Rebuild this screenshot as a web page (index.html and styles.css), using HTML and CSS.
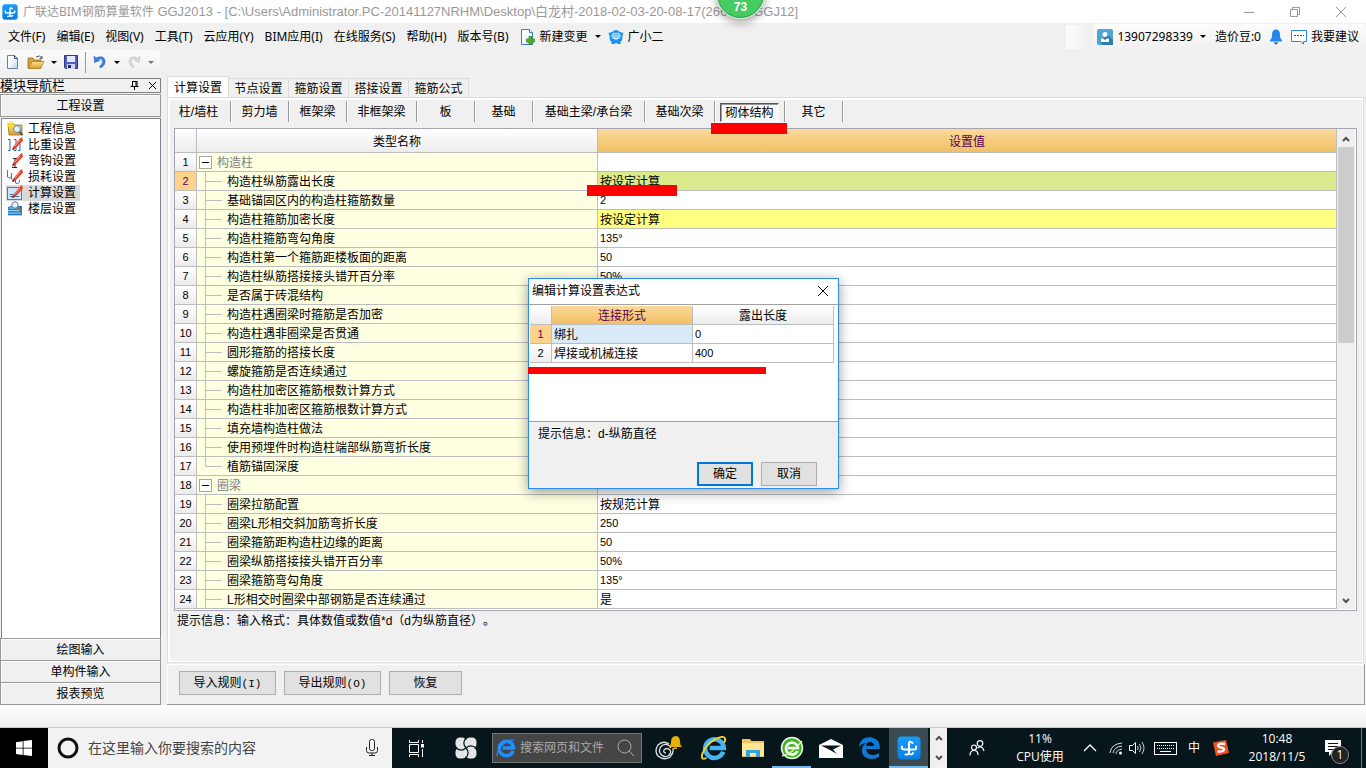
FILE: index.html
```html
<!DOCTYPE html>
<html lang="zh-CN">
<head>
<meta charset="utf-8">
<title>广联达BIM钢筋算量软件 GGJ2013</title>
<link rel="stylesheet" href="styles.css">
</head>
<body>
<svg width="0" height="0" class="defs" aria-hidden="true">
  <defs>
    <linearGradient id="gold" x1="0" y1="0" x2="0" y2="1"><stop offset="0" stop-color="#fbe38e"/><stop offset="1" stop-color="#dc9d2a"/></linearGradient>
    <linearGradient id="sky" x1="0" y1="0" x2="0" y2="1"><stop offset="0" stop-color="#1a9dfb"/><stop offset="1" stop-color="#067fe6"/></linearGradient>
    <linearGradient id="paper" x1="0" y1="0" x2="1" y2="1"><stop offset="0.4" stop-color="#fff"/><stop offset="1" stop-color="#b9d0ea"/></linearGradient>
    <symbol id="ggj" viewBox="0 0 24 24"><rect x="0.5" y="0.5" width="23" height="23" rx="4" fill="url(#sky)"/><path d="M15.500 7Q12 4 12 8v8q0 3-3.500 2.500M5 10.500Q4 13.500 7.500 13.500H17q3 0 2-3M12 17.500q3 2 4-.5" fill="none" stroke="#fff" stroke-width="2" stroke-linecap="round"/></symbol>
    <symbol id="ie" viewBox="0 0 24 24"><path d="M20.500 15.500A8.600 8.600 0 1 1 21 12H8" fill="none" stroke="currentColor" stroke-width="4.200"/></symbol>
    <symbol id="pencil" viewBox="0 0 16 16"><path d="M6 10L12.500 2 15 0l1 3.500L8.500 11.500 5.500 13z" fill="#e8432a"/><path d="M8 9l5-6" stroke="#ffa08a" stroke-width="1"/><path d="M5 13l1-2.200 1.800 1.200z" fill="#333"/></symbol>
  </defs>
</svg>

<header class="titlebar">
  <svg class="app-icon" aria-hidden="true"><use href="#ggj"/></svg>
  <h1><span class="appname">广联达BIM钢筋算量软件</span> GGJ2013 - [C:\Users\Administrator.PC-20141127NRHM\Desktop\白龙村-2018-02-03-20-08-17(266<span class="tail">GGJ12]</span></h1>
  <div class="winbtns">
    <button aria-label="最小化"><svg width="12" height="12"><path d="M1 6.500h10" stroke="#999"/></svg></button>
    <button aria-label="还原"><svg width="12" height="12"><path d="M1.500 3.500h7v7h-7zM3.500 3V1.500h7v7H9" fill="none" stroke="#999"/></svg></button>
    <button aria-label="关闭"><svg width="12" height="12"><path d="M1 1l10 10M11 1L1 11" stroke="#999"/></svg></button>
  </div>
  <div class="speed">73</div>
</header>

<nav class="menubar">
  <button>文件(F)</button><button>编辑(E)</button><button>视图(V)</button><button>工具(T)</button><button>云应用(Y)</button><button>BIM应用(I)</button><button>在线服务(S)</button><button>帮助(H)</button><button>版本号(B)</button>
  <button class="withicon"><svg width="16" height="16" viewBox="0 0 16 16"><path d="M1.500.5h8l3 3v12h-11z" fill="url(#paper)" stroke="#3b82b8"/><path d="M9.500.5v3h3" fill="#fff" stroke="#3b82b8"/><path d="M9 7.500h3v2.500h2.500v3H12v2.500H9V13H6.500v-3H9z" fill="#4db51b" stroke="#2b8a0e" stroke-width=".7"/></svg>新建变更<i class="caret"></i></button>
  <button class="withicon"><svg width="16" height="16" viewBox="0 0 16 16"><path d="M4 3q4-4 8 0l3.500 1-1 3q0 5-2 6v2H9v-1H7v1H3.500v-2q-2-1-2-6l-1-3z" fill="#1b94ec"/><ellipse cx="8" cy="7" rx="5" ry="3.500" fill="#74caff"/><circle cx="6" cy="5.500" r="1.300" fill="#fff"/><circle cx="10" cy="5.500" r="1.300" fill="#fff"/><circle cx="6.200" cy="5.500" r=".6"/><circle cx="9.800" cy="5.500" r=".6"/><path d="M5 8.500q3 3 6 0" fill="none" stroke="#fff"/></svg>广小二</button>
  <span class="grow"></span>
  <span class="grip"></span>
  <div class="account">
    <button><svg width="16" height="16" viewBox="0 0 16 16"><rect width="16" height="16" rx="2" fill="#4ba6d6"/><path d="M10 5l6 6v5H6l-3-3z" fill="#347ca8"/><circle cx="8" cy="5.500" r="2.500" fill="#fff"/><path d="M4 13V9.500h2L8 11l2-1.500h2V13z" fill="#fff"/></svg>13907298339<i class="caret"></i></button>
    <span>造价豆:0</span>
    <button aria-label="消息"><svg width="12" height="16" viewBox="0 0 12 16"><path d="M6 .5q4 0 4 5.500 0 4 2 5v1.500H0V11q2-1 2-5Q2 .5 6 .5z" fill="#2188f0"/><path d="M3.500 13.500h5L6 15.500z" fill="#123c78"/></svg></button>
    <button><svg width="16" height="16" viewBox="0 0 16 16"><path d="M.5 1.500h15v11h-3v2.500l-3-2.500h-9z" fill="#fff" stroke="#2484f0"/><path d="M3 6.500h10" stroke="#125ab8" stroke-dasharray="2 1"/></svg>我要建议</button>
  </div>
</nav>

<div class="toolbar">
  <button aria-label="新建"><svg width="16" height="16" viewBox="0 0 16 16"><path d="M3.500 1.500h7l3 3v10h-10z" fill="url(#paper)" stroke="#6d7f9c"/><path d="M10.500 1.500v3h3" fill="none" stroke="#34425c"/></svg></button>
  <button aria-label="打开"><svg width="18" height="16" viewBox="0 0 18 16"><path d="M1 14V4h5l1 2h7v8z" fill="#d5a33a" stroke="#8c6518" stroke-width=".7"/><path d="M1.500 14.500L5 7.500h12l-3.500 7z" fill="url(#gold)" stroke="#a8761a" stroke-width=".7"/><path d="M9 3q4-2.500 6 1m0-2v2.500h-2.500" fill="none" stroke="#555"/></svg></button><i class="caret"></i>
  <button aria-label="保存"><svg width="16" height="16" viewBox="0 0 16 16"><path d="M1.500 1.500h13v13h-12l-1-1z" fill="#5860c0" stroke="#30358e"/><rect x="4" y="2" width="8" height="6" fill="#e3e8fc"/><rect x="4" y="10" width="8" height="5" fill="#d0d4f0"/><rect x="5" y="11" width="3" height="3" fill="#262a70"/></svg></button>
  <span class="vsep"></span>
  <button aria-label="撤销"><svg width="16" height="16" viewBox="0 0 16 16"><path d="M2 2l.5 6.500L8 6.500 6 5.500q4-2 4.500 1.500.4 3-3 5.500l1 1.500q5-2.500 4.500-7.500Q11.500.5 4 4z" fill="#3c7de0" stroke="#245db8" stroke-width=".5"/></svg></button><i class="caret"></i>
  <button aria-label="重做" disabled><svg width="16" height="16" viewBox="0 0 16 16"><path d="M14 2l-.5 6.500L8 6.500l2-1Q6 3.500 5.500 7q-.4 3 3 5.500l-1 1.500Q2.500 11.500 3 6.500 4.500.5 12 4z" fill="#d7d7d7" stroke="#c3c3c3" stroke-width=".5"/></svg></button><i class="caret dim"></i>
</div>

<main class="workspace">
  <aside class="navigator">
    <div class="navhead"><h2>模块导航栏</h2>
      <button aria-label="固定"><svg width="9" height="9"><path d="M2 .5h5M2.500 0v5.500M6 0v5.500M7 0v5.500M.5 5.500h8M4.500 6v3" stroke="#000" fill="none"/></svg></button>
      <button aria-label="关闭"><svg width="9" height="9"><path d="M1 1l7 7M8 1L1 8" stroke="#000"/></svg></button>
    </div>
    <button class="section">工程设置</button>
    <ul class="tree">
      <li><svg width="16" height="16" viewBox="0 0 16 16"><path d="M1 3h6l1 1h7v10H2z" fill="url(#gold)" stroke="#96701f" stroke-width=".8"/><path d="M0 1l6 5M6 0L1 6M3 0v7M0 4h7" stroke="#ffe600"/><circle cx="10" cy="8" r="3.500" fill="#dcefff" stroke="#667f9c"/><path d="M12.500 11l3 3" stroke="#555" stroke-width="2"/></svg>工程信息</li>
      <li><svg width="16" height="16" viewBox="0 0 16 16"><path d="M1 2.500h2v11H1M7 2.500h2v11H7M11 13.500h2v-7" fill="none" stroke="#2b62b0"/><use href="#pencil"/></svg>比重设置</li>
      <li><svg width="16" height="16" viewBox="0 0 16 16"><path d="M6 5.500h4M8 6v8M5 14.500h5" stroke="#222"/><use href="#pencil"/></svg>弯钩设置</li>
      <li><svg width="16" height="16" viewBox="0 0 16 16"><path d="M.5 1v7q4 3 4-2V4v6q4 4 4-1v5q4 2 4-3" fill="none" stroke="#3477c4"/><use href="#pencil"/></svg>损耗设置</li>
      <li class="current"><svg width="16" height="16" viewBox="0 0 16 16"><rect x=".5" y="2.500" width="14" height="12" fill="#cfe5fc" stroke="#3d7fcb"/><path d="M3 9.500h3M3 11.500h9" stroke="#3f75bd"/><use href="#pencil"/></svg>计算设置</li>
      <li><svg width="16" height="16" viewBox="0 0 16 16"><path d="M1 13V6l3-1h11v9l-3 1H1z" fill="#237ac8"/><path d="M2 7h10M1 9.500h13M1 12h13M1 14.500h12" stroke="#9dddff"/><circle cx="8" cy="4" r="3.200" fill="#e3f3ff" stroke="#68798d"/><path d="M10 6.500l4 3" stroke="#8b704d" stroke-width="2"/></svg>楼层设置</li>
    </ul>
    <button class="section low">绘图输入</button>
    <button class="section low">单构件输入</button>
    <button class="section low">报表预览</button>
  </aside>

  <section class="content">
    <div class="tabs" role="tablist">
      <button role="tab" aria-selected="true">计算设置</button><button role="tab">节点设置</button><button role="tab">箍筋设置</button><button role="tab">搭接设置</button><button role="tab">箍筋公式</button>
    </div>
    <div class="page">
      <div class="subtabs">
        <button class="first">柱/墙柱</button><button>剪力墙</button><button>框架梁</button><button class="mid">非框架梁</button><button>板</button><button>基础</button><button class="wide">基础主梁/承台梁</button><button class="mid">基础次梁</button><button class="mid picked"><span>砌体结构</span><i class="mark"></i></button><button>其它</button>
      </div>
      <div class="gridframe">
        <table class="grid">
          <colgroup><col class="c-num"><col class="c-name"><col></colgroup>
          <thead><tr><th></th><th>类型名称</th><th class="hot">设置值</th></tr></thead>
          <tbody>
            <tr class="group"><th>1</th><td><button aria-label="折叠"></button>构造柱</td><td></td></tr>
            <tr class="active"><th>2</th><td>构造柱纵筋露出长度</td><td>按设定计算<i class="mark"></i></td></tr>
            <tr><th>3</th><td>基础锚固区内的构造柱箍筋数量</td><td class="n">2</td></tr>
            <tr class="custom"><th>4</th><td>构造柱箍筋加密长度</td><td>按设定计算</td></tr>
            <tr><th>5</th><td>构造柱箍筋弯勾角度</td><td class="n">135°</td></tr>
            <tr><th>6</th><td>构造柱第一个箍筋距楼板面的距离</td><td class="n">50</td></tr>
            <tr><th>7</th><td>构造柱纵筋搭接接头错开百分率</td><td class="n">50%</td></tr>
            <tr><th>8</th><td>是否属于砖混结构</td><td></td></tr>
            <tr><th>9</th><td>构造柱遇圈梁时箍筋是否加密</td><td></td></tr>
            <tr><th>10</th><td>构造柱遇非圈梁是否贯通</td><td></td></tr>
            <tr><th>11</th><td>圆形箍筋的搭接长度</td><td></td></tr>
            <tr><th>12</th><td>螺旋箍筋是否连续通过</td><td></td></tr>
            <tr><th>13</th><td>构造柱加密区箍筋根数计算方式</td><td></td></tr>
            <tr><th>14</th><td>构造柱非加密区箍筋根数计算方式</td><td></td></tr>
            <tr><th>15</th><td>填充墙构造柱做法</td><td></td></tr>
            <tr><th>16</th><td>使用预埋件时构造柱端部纵筋弯折长度</td><td></td></tr>
            <tr class="last"><th>17</th><td>植筋锚固深度</td><td></td></tr>
            <tr class="group"><th>18</th><td><button aria-label="折叠"></button>圈梁</td><td></td></tr>
            <tr><th>19</th><td>圈梁拉筋配置</td><td>按规范计算</td></tr>
            <tr><th>20</th><td>圈梁L形相交斜加筋弯折长度</td><td class="n">250</td></tr>
            <tr><th>21</th><td>圈梁箍筋距构造柱边缘的距离</td><td class="n">50</td></tr>
            <tr><th>22</th><td>圈梁纵筋搭接接头错开百分率</td><td class="n">50%</td></tr>
            <tr><th>23</th><td>圈梁箍筋弯勾角度</td><td class="n">135°</td></tr>
            <tr><th>24</th><td>L形相交时圈梁中部钢筋是否连续通过</td><td>是</td></tr>
          </tbody>
        </table>
        <div class="scroll">
          <button aria-label="向上"><svg width="8" height="6"><path d="M1 5l3-3 3 3" fill="none" stroke="#505050" stroke-width="2"/></svg></button>
          <div class="thumb"></div>
          <span class="grow"></span>
          <button aria-label="向下"><svg width="8" height="6"><path d="M1 1l3 3 3-3" fill="none" stroke="#505050" stroke-width="2"/></svg></button>
        </div>
      </div>
      <p class="hint">提示信息：输入格式：具体数值或数值*d（d为纵筋直径）。</p>
    </div>
    <div class="actions">
      <button class="btn wide">导入规则<span class="mono">(I)</span></button>
      <button class="btn wide">导出规则<span class="mono">(O)</span></button>
      <button class="btn mid">恢复</button>
    </div>
  </section>
</main>
<div class="statusbar"></div>

<div class="dialog" role="dialog" aria-labelledby="dlg-title">
  <div class="dlg-head"><h2 id="dlg-title">编辑计算设置表达式</h2><button aria-label="关闭"><svg width="12" height="12"><path d="M1 1l10 10M11 1L1 11" stroke="#000"/></svg></button></div>
  <div class="dlg-grid">
    <table class="grid">
      <colgroup><col class="c-num"><col><col></colgroup>
      <thead><tr><th></th><th class="hot">连接形式</th><th>露出长度</th></tr></thead>
      <tbody>
        <tr class="active"><th>1</th><td>绑扎</td><td class="n">0</td></tr>
        <tr><th>2</th><td>焊接或机械连接</td><td class="n">400</td></tr>
      </tbody>
    </table>
    <i class="mark"></i>
  </div>
  <p>提示信息：d-纵筋直径</p>
  <div class="dlg-actions"><button class="btn default">确定</button><button class="btn">取消</button></div>
</div>

<footer class="taskbar">
  <button class="start" aria-label="开始"><svg width="16" height="16" viewBox="0 0 16 16"><path d="M0 2.200l6.700-1v6.500H0zM7.500 1.100L16 0v7.700H7.500zM0 8.400h6.700v6.500L0 13.900zM7.500 8.400H16V16l-8.500-1.100z" fill="#fff"/></svg></button>
  <div class="cortana">
    <svg width="22" height="22"><circle cx="11" cy="11" r="9" fill="none" stroke="#111" stroke-width="3"/></svg>
    <input type="text" aria-label="搜索" placeholder="在这里输入你要搜索的内容">
    <svg width="12" height="18"><rect x="3.500" y=".5" width="5" height="11" rx="2" fill="none" stroke="#222"/><path d="M.5 8v3.500q0 2.500 2.500 2.500h6q2.500 0 2.500-2.500V8M6 14v2.500M3 16.500h6" fill="none" stroke="#222"/></svg>
  </div>
  <button class="s48" aria-label="任务视图"><svg width="17" height="17"><path d="M1.500 4.500h9v8h-9zM1.500 0v2.500h9V0M1.500 17v-2.500h9V17M14.500 0v3M14.500 9v8" fill="none" stroke="#fff"/><path d="M13 4h3v3.500h-3z" fill="#fff"/></svg></button>
  <button class="s52" aria-label="浏览器"><svg width="22" height="22" viewBox="0 0 22 22"><g fill="#e3e5e6"><rect x=".5" y=".5" width="11" height="11" rx="4.500"/><rect x="10.500" y=".5" width="11" height="11" rx="4.500"/><rect x=".5" y="10.500" width="11" height="11" rx="4.500"/><rect x="10.500" y="10.500" width="11" height="11" rx="4.500"/><rect x="6" y="6" width="10" height="10"/></g><g fill="none" stroke="#07161b" stroke-width="1.200"><path id="blade" d="M11 11Q6.500 6 11.500.5"/><use href="#blade" transform="rotate(90 11 11)"/><use href="#blade" transform="rotate(180 11 11)"/><use href="#blade" transform="rotate(270 11 11)"/></g></svg></button>
  <div class="websearch">
    <svg width="20" height="20" viewBox="0 0 24 24" color="#1f8fff"><use href="#ie"/><path d="M2 22Q-1 18 8 8q9-8 14-5" fill="none" stroke="#1f8fff" stroke-width="1.500"/></svg>
    <input type="text" aria-label="搜索网页和文件" placeholder="搜索网页和文件">
    <svg width="18" height="18"><circle cx="7.500" cy="7.500" r="6.500" fill="none" stroke="#aaa"/><path d="M12 12l5 5" stroke="#aaa"/></svg>
  </div>
  <button class="s52" aria-label="通知铃"><svg width="28" height="26" viewBox="0 0 28 26"><g fill="none" stroke="#dfe5e6" stroke-width="1.300"><path d="M15 9Q9 5 4 10 0 16 4 21q6 5 12 1 4-4 3-9"/><path d="M17 13q-3-5-8-3-5 3-3 8 3 5 8 3 4-3 2-6-3-3-6 0-1 3 2 3"/></g><path d="M22 1q4 0 4 6 0 3 2 5H15q2-2 2-5 0-6 5-6zM20 12.500h3v1.500h-3z" fill="#e8b000"/></svg></button>
  <button class="s39" aria-label="Internet Explorer"><svg width="26" height="26" viewBox="0 0 24 24" color="#45b4f0"><use href="#ie"/><path d="M5 21Q0 24 1 18 4 9 13 4q8-4 9-1 1 2-1 4" fill="none" stroke="#f4d02d" stroke-width="1.800"/></svg></button>
  <button class="s39" aria-label="文件资源管理器"><svg width="22" height="18" viewBox="0 0 22 18"><path d="M0 0h8l1.500 2H22v16H0z" fill="#f0c65c"/><path d="M0 4h22v13H0z" fill="#ffe695"/><path d="M4 18v-7h14v7h-4v-4H8v4z" fill="#2ea3e0"/></svg></button>
  <button class="s39 running" aria-label="安全浏览器"><svg width="24" height="24" viewBox="0 0 24 24"><circle cx="12" cy="12" r="10.500" fill="#46b426" stroke="#e9f7e4" stroke-width="1.500"/><path d="M17.500 15a6 6 0 1 1 .5-3H8" fill="none" stroke="#fff" stroke-width="2.500"/><path d="M2 20Q12 18 22 5" fill="none" stroke="#d7f6a9" stroke-width="1.300"/></svg></button>
  <button class="s39" aria-label="邮件"><svg width="24" height="19" viewBox="0 0 24 19"><path d="M0 6l12-6 12 6v13H0z" fill="#fff"/><path d="M2 6.500h20l-8 4 4 4.500-7-4z" fill="#07161b"/></svg></button>
  <button class="s39" aria-label="Edge"><svg width="22" height="22" viewBox="0 0 22 22"><path d="M0 10Q1 0 11 0q10 1 10 12H7q1 6 7 6 3 0 6-2v4q-4 2-8 2Q2 21 3 12 4 7 8 6 3 6 0 10zm7-1h8q0-4-4-4-3 0-4 4z" fill="#0f79d6"/></svg></button>
  <button class="s39 open" aria-label="GGJ2013"><svg width="24" height="24"><use href="#ggj"/></svg></button>
  <div class="spinner">
    <button aria-label="上一页"><svg width="8" height="6"><path d="M1 5l3-3 3 3" fill="none" stroke="#505050" stroke-width="2"/></svg></button>
    <button aria-label="下一页"><svg width="8" height="6"><path d="M1 1l3 3 3-3" fill="none" stroke="#505050" stroke-width="2"/></svg></button>
  </div>
  <button class="t-people" aria-label="人脉"><svg width="16" height="16" viewBox="0 0 16 16"><g fill="none" stroke="#fff" stroke-width="1.200"><circle cx="11" cy="3.500" r="2.800"/><circle cx="5" cy="7.500" r="2.500"/><path d="M1 15.500q0-5 4-5t4 4.500M8.500 8q5-3 6.500 3"/></g></svg></button>
  <div class="t-cpu"><span>11%</span><span>CPU使用</span></div>
  <button class="t-up" aria-label="显示隐藏的图标"><svg width="14" height="8"><path d="M1 7l6-6 6 6" fill="none" stroke="#fff" stroke-width="1.300"/></svg></button>
  <button class="t-net" aria-label="网络"><svg width="14" height="14"><g fill="none" stroke="#ddd"><path d="M1 12Q2 3 13 2M4 12q1-6 9-7M7 13q0-4 6-5"/></g><circle cx="11.500" cy="12" r="1.500" fill="#fff"/></svg></button>
  <button class="t-vol" aria-label="音量"><svg width="16" height="14"><path d="M.5 4.500h3l3-3v11l-3-3h-3z" fill="none" stroke="#fff"/><path d="M8.500 5q1.500 2 0 4M10.500 3q3 4 0 8M13 1q4 6 0 12" fill="none" stroke="#ccc"/></svg></button>
  <button class="t-kbd" aria-label="触摸键盘"><svg width="23" height="13"><rect x=".5" y=".5" width="22" height="12" fill="none" stroke="#fff"/><path d="M3 3.500h18M3 6.500h18" stroke="#fff" stroke-dasharray="1 1"/><path d="M6 9.500h11" stroke="#fff"/></svg></button>
  <button class="t-ime">中</button>
  <button class="t-sogou" aria-label="搜狗输入法"><svg width="16" height="16" viewBox="0 0 16 16"><path d="M0 2.500L13 0l3 13-13 3z" fill="#f4511e"/><path d="M12 4Q5 3 5 5.500q0 1.500 3 2t3 2Q11 12 4.500 11.500" fill="none" stroke="#fff" stroke-width="2.300"/></svg></button>
  <div class="t-clock"><span>10:48</span><span>2018/11/5</span></div>
  <button class="t-note" aria-label="1 条新通知"><svg width="16" height="16"><path d="M0 0h16v12h-8l-4 4v-4H0z" fill="#fff"/><path d="M3 3.500h10M3 6.500h10M3 9.500h7" stroke="#111"/></svg><b>1</b></button>
  <span class="t-edge"></span>
</footer>
</body>
</html>
```
FILE: styles.css
```css
* { box-sizing: border-box; }

body {
  margin: 0;
  min-height: 100vh;
  display: flex;
  flex-direction: column;
  position: relative;
  background: #f0f0f0;
  color: #000;
  font: 12px/16px "Liberation Sans", "Noto Sans CJK SC", sans-serif;
  text-spacing-trim: space-all;
  overflow-x: hidden;
}

button, input {
  font: inherit;
  color: inherit;
  border: 0;
  margin: 0;
  padding: 0;
  background: none;
}
h1, h2, p, ul { margin: 0; padding: 0; font: inherit; }
svg { flex: none; display: block; }
.defs { position: absolute; }
.grow { flex: 1; }
.mono { font-family: "Liberation Mono", monospace; font-size: 11px; }
.mark { position: absolute; background: #f00; }

.caret {
  border: 3px solid transparent;
  border-top-color: #000;
  border-bottom: 0;
}
.caret.dim { border-top-color: #777; }

/* Title bar */
.titlebar {
  position: relative;
  display: flex;
  align-items: center;
  height: 23px;
  padding-left: 2px;
  background: #fff;
  color: #999;
}
.app-icon { width: 16px; height: 16px; }
.titlebar h1 { flex: 1; margin-left: 5px; font-size: 13px; white-space: nowrap; }
.titlebar .appname { font-family: "Noto Sans", "Noto Sans CJK SC", sans-serif; font-size: 12px; }
.titlebar .tail { margin-left: 26px; }
.winbtns { display: flex; height: 20px; margin-right: 2px; }
.winbtns button { width: 46px; display: grid; place-items: center; }
.speed {
  position: absolute;
  left: 717px;
  top: -29px;
  width: 47px;
  height: 47px;
  border: 1px solid #2c9a4c;
  border-radius: 50%;
  background: #45cb62;
  box-shadow: 0 0 0 1px #d6ead9, 0 4px 10px #0006;
  color: #fff;
  font-weight: bold;
  text-align: center;
  padding-top: 27px;
  z-index: 2;
}

/* Menus */
.menubar {
  display: flex;
  align-items: center;
  height: 27px;
  padding-left: 8px;
  font-family: "Noto Sans", "Noto Sans CJK SC", sans-serif;
  white-space: nowrap;
}
.menubar > button { margin-right: 11px; }
.menubar .withicon { display: flex; align-items: center; gap: 4px; margin-right: 7px; }
.withicon .caret { margin-left: 3px; }
.grip { width: 25px; height: 24px; background: linear-gradient(90deg, #fcfcfc, #f0f0f0); }
.account {
  display: flex;
  align-items: center;
  gap: 9px;
  height: 25px;
  margin-left: 2px;
  padding: 0 7px 0 4px;
  border-radius: 3px;
  background: linear-gradient(#fcfcfc, #f0f0f0);
}
.account button { display: flex; align-items: center; gap: 4px; }
.account .caret { margin-left: 3px; }

.toolbar {
  display: flex;
  align-items: center;
  align-self: flex-start;
  gap: 5px;
  height: 24px;
  padding: 0 6px 0 3px;
  border-radius: 3px;
  background: linear-gradient(#fafafa, #f0f0f0);
}
.toolbar button { padding: 0 1px; }
.vsep { width: 1px; height: 21px; background: #999; }

/* Workspace */
.workspace { flex: 1; display: flex; gap: 6px; padding: 3px 1px 0 0; }
.navigator { width: 161px; display: flex; flex-direction: column; margin-top: 1px; }
.navhead {
  display: flex;
  align-items: center;
  gap: 9px;
  height: 15px;
  padding-right: 3px;
  border: 1px solid #808080;
  border-left: 0;
}
.navhead h2 { flex: 1; line-height: 13px; font-size: 13px; }
.section {
  height: 23px;
  margin: 1px 0 0;
  padding-top: 1px;
  border: 1px solid #999;
  box-shadow: inset 1px 1px #fff;
}
.section.low { margin-top: -1px; }
.tree {
  flex: 1;
  margin: 1px 0 0 1px;
  padding: 2px 0 0 4px;
  border: 1px solid #82868f;
  background: #fff;
  list-style: none;
}
.tree li { display: flex; align-items: center; gap: 5px; width: 74px; height: 16px; line-height: 16px; padding-left: 1px; white-space: nowrap; }
.tree .current { background: #d9d9d9; }

.content { flex: 1; min-width: 0; display: flex; flex-direction: column; }
.tabs { display: flex; align-items: flex-end; height: 20px; }
.tabs button {
  width: 60px;
  height: 19px;
  padding-top: 1px;
  border: 1px solid #dcdcdc;
  border-left: 0;
  border-bottom: 0;
}
.tabs [aria-selected] { width: 62px; height: 21px; background: #fff; border-left: 1px solid #dcdcdc; }
.page { flex: 1; margin-right: 1px; border: 1px solid #dcdcdc; box-shadow: inset 2px 2px #fff, inset -1px -1px #fff; padding: 3px 6px 3px 2px; }
.subtabs { display: flex; height: 21px; }
.subtabs button { width: 58px; border-right: 1px solid #999; box-shadow: 1px 0 #fff; white-space: nowrap; }
.subtabs .first { width: 61px; padding-right: 3px; }
.subtabs .mid { width: 70px; }
.subtabs .wide { width: 112px; }
.subtabs .picked { position: relative; padding: 1px 5px 0; }
.picked span { display: block; height: 19px; line-height: 18px; border: 1px solid; border-color: #555 #fff #fff #555; background: #f8f8f8; box-shadow: inset 1px 1px #999; }
.picked .mark { left: -4px; top: 22px; width: 76px; height: 11px; z-index: 1; }

.gridframe { display: flex; margin: 6px 0 0 4px; padding-bottom: 1px; border: 1px solid #a5a8b4; background: #fff; }
.grid { flex: 1; width: 100%; table-layout: fixed; border-collapse: separate; border-spacing: 0; }
.c-num { width: 22px; }
.c-name { width: 401px; }
.grid th, .grid td {
  height: 19px;
  padding: 2px 2px 0;
  border: solid #bdbdbd;
  border-width: 0 1px 1px 0;
  line-height: 16px;
  font-weight: normal;
  text-align: left;
  white-space: nowrap;
}
.grid th { text-align: center; padding: 0; background: linear-gradient(#fff, #ececec); }
.grid thead th { height: 24px; padding-top: 2px; }
.grid tbody th, .grid .n { font-size: 11px; }
.grid .n { padding-top: 0; }
.grid .hot { background: linear-gradient(#fbd99a, #f1c064); color: #5a0050; }
.grid .active th { background: #ffd28c; color: #5a0050; }
.gridframe tbody td:nth-child(2) {
  padding-left: 30px;
  background:
    linear-gradient(#bdbdbd, #bdbdbd) 8px 0 / 1px 100% no-repeat,
    linear-gradient(#bdbdbd, #bdbdbd) 8px 9px / 17px 1px no-repeat,
    #ffffe1;
}
.gridframe .last td:nth-child(2) { background-size: 1px 9px, 17px 1px, auto; }
.gridframe .group td:nth-child(2) { padding-left: 2px; background: #ffffe1; color: #808080; }
.group button {
  width: 13px;
  height: 13px;
  margin: -2px 5px 0 0;
  border: 1px solid #a8a8a8;
  background: linear-gradient(#000, #000) center / 7px 1px no-repeat #fff;
  vertical-align: middle;
}
.gridframe .active td:last-child { position: relative; background: #d9eb8c; }
.gridframe .custom td:last-child { background: #ffff80; }
.active .mark { left: -11px; top: 13px; width: 90px; height: 11px; z-index: 1; }

.scroll { display: flex; flex-direction: column; width: 19px; padding: 1px 1px 0; background: #f0f0f0; border: solid #fff; border-width: 0 1px 0 0; }
.scroll button { height: 17px; display: grid; place-items: center; }
.thumb { height: 196px; background: #cdcdcd; }
.hint { padding: 1px 3px 1px 7px; line-height: 18px; }

.actions { display: flex; gap: 8px; height: 41px; margin-top: 1px; padding: 7px 12px; border: solid #999; border-width: 0 1px 1px 0; box-shadow: inset 1px 1px #fff; }
.btn { width: 56px; height: 24px; border: 1px solid #adadad; background: #e1e1e1; }
.btn.wide { width: 97px; }
.btn.mid { width: 73px; }
.btn.default { border: 2px solid #0078d7; }
.statusbar { height: 23px; background: linear-gradient(#fdfdfd, #f0f0f0); border-bottom: 1px solid #ccc; }

/* Expression dialog */
.dialog {
  position: absolute;
  left: 528px;
  top: 278px;
  width: 311px;
  border: 1px solid #2a8dea;
  background: #f0f0f0;
  box-shadow: 0 3px 12px #0006;
  z-index: 3;
}
.dlg-head { display: flex; align-items: center; justify-content: space-between; height: 25px; padding: 0 9px 1px 3px; background: #fff; }
.dlg-grid { position: relative; height: 118px; padding: 1px 4px 0 1px; border: solid #a0a0a0; border-width: 1px 0; background: #fff; }
.dlg-grid thead th { height: 19px; }
.dlg-grid .active td:nth-child(2) { background: #d9eaf9; }
.dlg-grid .mark { left: -1px; top: 62px; width: 238px; height: 7px; }
.dialog p { padding: 4px 9px 2px; }
.dlg-actions { display: flex; justify-content: flex-end; gap: 8px; padding: 18px 21px 2px; }

/* Taskbar */
.taskbar { display: flex; height: 40px; background: #07161b; color: #fff; font-family: "Open Sans", "Noto Sans CJK SC", sans-serif; }
.taskbar button { display: grid; place-items: center; flex: none; }
.start { width: 48px; background: #000; }
.cortana { flex: 1; min-width: 0; display: flex; align-items: center; gap: 9px; padding: 0 14px 0 9px; background: #f2f2f2; }
.cortana input { flex: 1; min-width: 0; font-size: 14px; color: #333; }
.cortana input::placeholder { color: #444; opacity: 1; }
.s48 { width: 48px; }
.s52 { width: 52px; }
.taskbar .s39 { width: 39px; border: solid transparent; border-width: 2px 0; }
.taskbar .running { border-bottom-color: #76b9ed; }
.taskbar .open { background: #3b4a50; border-color: #3b4a50; border-bottom-color: #76b9ed; }
.websearch { display: flex; align-items: center; gap: 4px; width: 150px; height: 30px; margin: 5px 0; padding: 0 6px 0 3px; border: 1px solid #6f7779; background: #454545; }
.websearch input { flex: 1; min-width: 0; }
.websearch input::placeholder { color: #aaa; opacity: 1; }
.spinner { display: flex; flex-direction: column; width: 17px; margin-left: 2px; background: #f0f0f0; }
.spinner button { flex: 1 0 17px; }
.t-people { width: 60px; }
.t-cpu { width: 66px; }
.t-up { width: 34px; }
.t-net { width: 18px; }
.t-vol { width: 24px; }
.t-kbd { width: 32px; }
.t-ime { width: 26px; }
.t-sogou { width: 28px; }
.t-clock { width: 84px; }
.t-cpu, .t-clock { display: flex; flex-direction: column; justify-content: center; align-items: center; line-height: 18px; white-space: nowrap; }
.t-note { position: relative; width: 42px; }
.taskbar .t-note { padding-right: 14px; }
.t-note b { position: absolute; left: 12px; top: 18px; width: 18px; height: 18px; border: 1px solid #888; border-radius: 50%; background: #222; line-height: 16px; font-weight: normal; }
.t-edge { width: 5px; border-left: 1px solid #777; }
```
